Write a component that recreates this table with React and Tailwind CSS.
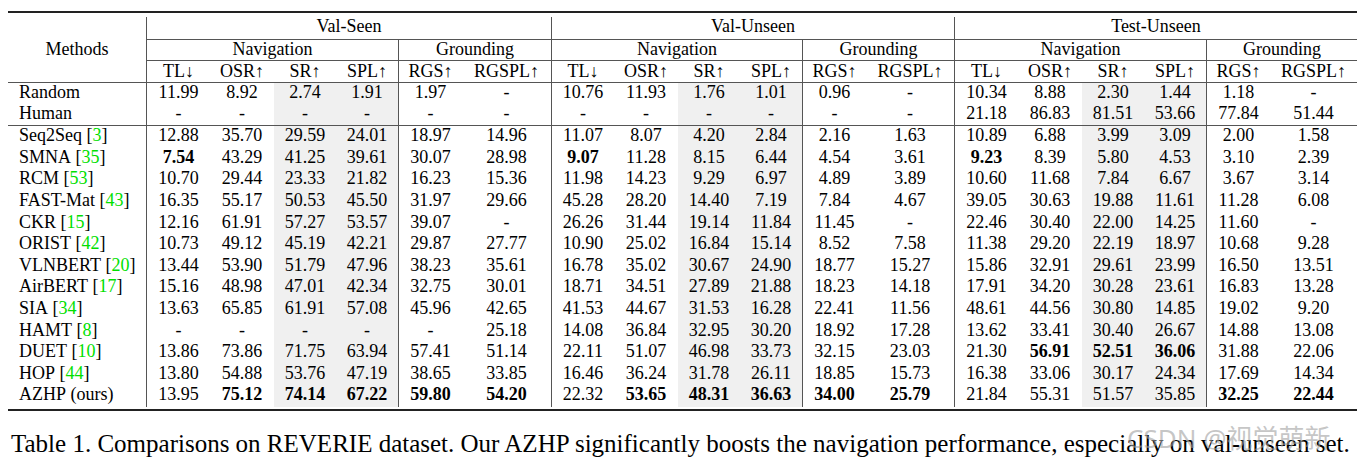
import React from "react";

const COLS =
  "grid-cols-[138px_64px_64px_62px_62px_64px_89px_63px_64px_62px_62px_64px_88px_64px_64px_62px_62px_64px_87px]";

const METRICS = ["TL↓", "OSR↑", "SR↑", "SPL↑", "RGS↑", "RGSPL↑"];
const SPLITS = ["Val-Seen", "Val-Unseen", "Test-Unseen"];

const ROWS = [
  ["Random", null, "11.99 8.92 2.74 1.91 1.97 - 10.76 11.93 1.76 1.01 0.96 - 10.34 8.88 2.30 1.44 1.18 -"],
  ["Human", null, "- - - - - - - - - - - - 21.18 86.83 81.51 53.66 77.84 51.44", true],
  ["Seq2Seq", "3", "12.88 35.70 29.59 24.01 18.97 14.96 11.07 8.07 4.20 2.84 2.16 1.63 10.89 6.88 3.99 3.09 2.00 1.58"],
  ["SMNA", "35", "*7.54 43.29 41.25 39.61 30.07 28.98 *9.07 11.28 8.15 6.44 4.54 3.61 *9.23 8.39 5.80 4.53 3.10 2.39"],
  ["RCM", "53", "10.70 29.44 23.33 21.82 16.23 15.36 11.98 14.23 9.29 6.97 4.89 3.89 10.60 11.68 7.84 6.67 3.67 3.14"],
  ["FAST-Mat", "43", "16.35 55.17 50.53 45.50 31.97 29.66 45.28 28.20 14.40 7.19 7.84 4.67 39.05 30.63 19.88 11.61 11.28 6.08"],
  ["CKR", "15", "12.16 61.91 57.27 53.57 39.07 - 26.26 31.44 19.14 11.84 11.45 - 22.46 30.40 22.00 14.25 11.60 -"],
  ["ORIST", "42", "10.73 49.12 45.19 42.21 29.87 27.77 10.90 25.02 16.84 15.14 8.52 7.58 11.38 29.20 22.19 18.97 10.68 9.28"],
  ["VLNBERT", "20", "13.44 53.90 51.79 47.96 38.23 35.61 16.78 35.02 30.67 24.90 18.77 15.27 15.86 32.91 29.61 23.99 16.50 13.51"],
  ["AirBERT", "17", "15.16 48.98 47.01 42.34 32.75 30.01 18.71 34.51 27.89 21.88 18.23 14.18 17.91 34.20 30.28 23.61 16.83 13.28"],
  ["SIA", "34", "13.63 65.85 61.91 57.08 45.96 42.65 41.53 44.67 31.53 16.28 22.41 11.56 48.61 44.56 30.80 14.85 19.02 9.20"],
  ["HAMT", "8", "- - - - - 25.18 14.08 36.84 32.95 30.20 18.92 17.28 13.62 33.41 30.40 26.67 14.88 13.08"],
  ["DUET", "10", "13.86 73.86 71.75 63.94 57.41 51.14 22.11 51.07 46.98 33.73 32.15 23.03 21.30 *56.91 *52.51 *36.06 31.88 22.06"],
  ["HOP", "44", "13.80 54.88 53.76 47.19 38.65 33.85 16.46 36.24 31.78 26.11 18.85 15.73 16.38 33.06 30.17 24.34 17.69 14.34"],
  ["AZHP", "ours", "13.95 *75.12 *74.14 *67.22 *59.80 *54.20 22.32 *53.65 *48.31 *36.63 *34.00 *25.79 21.84 55.31 51.57 35.85 *32.25 *22.44"],
];

function rowHeight(i) {
  if (i === 0) return "h-[21px]";
  if (i === 1) return "h-[22px] border-b border-[#555]";
  return "h-[21.6px]";
}

export default function App() {
  return (
    <div className="w-[1364px] h-[466px] bg-white text-black font-['Liberation_Serif',serif] pt-[11px] overflow-hidden">
      <div className="ml-[8px] w-[1349px]">
        <div className="border-t-2 border-b-2 border-[#222] pt-[4px] pb-[2px]">
          <div className={`grid ${COLS} text-[18px] leading-none`}>
            {/* header row 1 */}
            <div className="row-span-3 flex items-center justify-center pb-[2px] border-b border-[#555]">
              Methods
            </div>
            {SPLITS.map((s) => (
              <div
                key={s}
                className="col-span-6 h-[23px] flex items-center justify-center pb-[4px] border-l border-b border-[#555]"
              >
                {s}
              </div>
            ))}
            {/* header row 2 */}
            {SPLITS.map((s) => (
              <React.Fragment key={s + "g"}>
                <div className="col-span-4 h-[21px] flex items-center justify-center pb-[3px] border-l border-b border-[#555]">
                  Navigation
                </div>
                <div className="col-span-2 h-[21px] flex items-center justify-center pb-[3px] border-l border-b border-[#555]">
                  Grounding
                </div>
              </React.Fragment>
            ))}
            {/* header row 3 */}
            {SPLITS.map((s) =>
              METRICS.map((m, mi) => (
                <div
                  key={s + m}
                  className={`h-[22px] flex items-center justify-center pb-[2px] border-b border-[#555] ${
                    mi === 0 || mi === 4 ? "border-l" : ""
                  }`}
                >
                  {m}
                </div>
              ))
            )}
            {/* body */}
            {ROWS.map((r, ri) => {
              const vals = r[2].split(" ");
              const h = rowHeight(ri);
              return (
                <React.Fragment key={r[0]}>
                  <div className={`${h} flex items-center justify-start pl-[11px] pb-[3px] whitespace-nowrap`}>
                    {r[0]}
                    {r[1] === "ours" ? (
                      <span>&nbsp;(ours)</span>
                    ) : r[1] ? (
                      <span>
                        &nbsp;[<span className="text-[#00e000]">{r[1]}</span>]
                      </span>
                    ) : null}
                  </div>
                  {vals.map((v, vi) => {
                    const m = vi % 6;
                    const bold = v.startsWith("*");
                    const txt = bold ? v.slice(1) : v;
                    return (
                      <div
                        key={vi}
                        className={`${h} flex items-center justify-center pb-[3px] border-[#555] ${
                          m === 0 || m === 4 ? "border-l" : ""
                        } ${m === 2 || m === 3 ? "bg-[#f0f0f0]" : ""} ${bold ? "font-bold" : ""}`}
                      >
                        {txt}
                      </div>
                    );
                  })}
                </React.Fragment>
              );
            })}
          </div>
        </div>
        <div className="relative mt-[18px] pl-[3px] text-[25px] leading-[29px] whitespace-nowrap">
          Table 1. Comparisons on REVERIE dataset. Our AZHP significantly boosts the navigation performance, especially on val-unseen set.
          <span className="absolute left-[1119px] top-[-4px] leading-[26px] text-[26px] font-['Noto_Sans','Noto_Sans_CJK_SC',sans-serif] text-[rgba(160,160,160,0.6)]">
            CSDN @视觉萌新
          </span>
        </div>
      </div>
    </div>
  );
}
